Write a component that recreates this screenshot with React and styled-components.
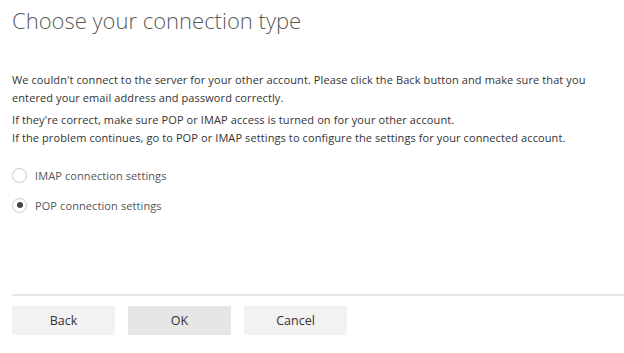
import React, { useState } from "react";
import styled, { createGlobalStyle } from "styled-components";

const GlobalStyle = createGlobalStyle`
  html, body {
    margin: 0;
    padding: 0;
    background: #ffffff;
  }
  body {
    font-family: "Open Sans", "Noto Sans", sans-serif;
    color: #333333;
  }
`;

const App = () => {
  const [type, setType] = useState("pop");

  return (
    <Page>
      <GlobalStyle />
      <Title>Choose your connection type</Title>
      <Body>
        <Text>
          We couldn't connect to the server for your other account. Please
          click the Back button and make sure that you entered your email
          address and password correctly.
        </Text>
        <Text>
          If they're correct, make sure POP or IMAP access is turned on for your
          other account.
          <br />
          If the problem continues, go to POP or IMAP settings to configure the
          settings for your connected account.
        </Text>
      </Body>
      <Options>
        <Option onClick={() => setType("imap")}>
          <Radio checked={type === "imap"} />
          <OptionLabel>IMAP connection settings</OptionLabel>
        </Option>
        <Option onClick={() => setType("pop")}>
          <Radio checked={type === "pop"} />
          <OptionLabel>POP connection settings</OptionLabel>
        </Option>
      </Options>
      <Divider />
      <Buttons>
        <Button>Back</Button>
        <Button primary>OK</Button>
        <Button>Cancel</Button>
      </Buttons>
    </Page>
  );
};

export default App;

const Page = styled.div`
  display: flex;
  flex-direction: column;
  padding: 0 0 0 12px;
  height: 353px;
  box-sizing: border-box;
`;

const Title = styled.h1`
  margin: 5px 0 0;
  font-size: 22px;
  line-height: 30px;
  font-weight: 300;
  color: #5a5a5a;
`;

const Body = styled.div`
  margin-top: 36px;
  display: flex;
  flex-direction: column;
  gap: 4px;
  padding-right: 24px;
`;

const Text = styled.p`
  margin: 0;
  font-size: 11px;
  line-height: 18px;
  letter-spacing: 0.1px;
  color: #333333;
`;

const Options = styled.div`
  margin-top: 19px;
  display: flex;
  flex-direction: column;
  gap: 12px;
`;

const Option = styled.label`
  display: flex;
  align-items: center;
  gap: 8px;
  height: 18px;
  cursor: pointer;
`;

const Radio = styled.span`
  width: 13px;
  height: 13px;
  border-radius: 50%;
  border: 1px solid #c8c8c8;
  position: relative;
  flex-shrink: 0;

  &::after {
    content: "";
    display: ${(p) => (p.checked ? "block" : "none")};
    position: absolute;
    left: 3.5px;
    top: 3.5px;
    width: 6px;
    height: 6px;
    border-radius: 50%;
    background: #444444;
  }
`;

const OptionLabel = styled.span`
  font-size: 11px;
  letter-spacing: 0.1px;
  color: #555555;
`;

const Divider = styled.div`
  margin-top: 80px;
  height: 2px;
  background: #e6e6e6;
`;

const Buttons = styled.div`
  margin-top: 10px;
  display: flex;
  gap: 13px;
`;

const Button = styled.button`
  width: 103px;
  height: 29px;
  border: none;
  background: ${(p) => (p.primary ? "#e6e6e6" : "#f2f2f2")};
  font-family: "Open Sans", "Noto Sans", sans-serif;
  font-size: 12.5px;
  color: #333333;
  cursor: pointer;
  padding: 0;
`;
